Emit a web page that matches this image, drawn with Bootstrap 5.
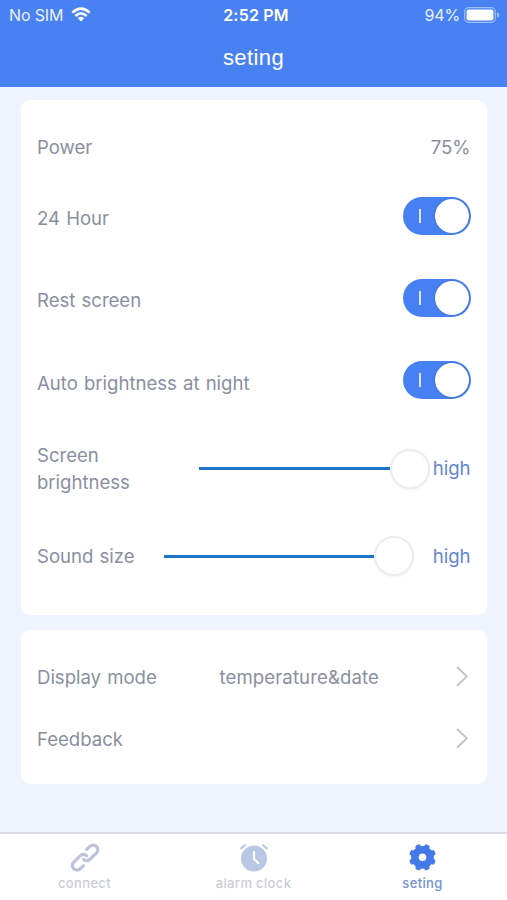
<!DOCTYPE html>
<html lang="en">
<head>
<meta charset="utf-8">
<meta name="viewport" content="width=device-width, initial-scale=1">
<title>seting</title>
<link href="https://cdn.jsdelivr.net/npm/bootstrap@5.3.0/dist/css/bootstrap.min.css" rel="stylesheet">
<style>
body{font-family:Inter,"Liberation Sans",sans-serif;background:#eff3ff;height:900px;overflow:hidden;color:#8a8f9f}
.topbar{background:#4881f2;height:87px;flex:none;color:#fff}
.status{height:29px;font-size:16px;line-height:30px;padding:0 7px 0 9px}
.status>div{flex:1 1 0}
.carrier{letter-spacing:-.15px;color:#e9f1ff}
.clock{font-weight:600;letter-spacing:.2px;padding-left:3px}
.title{font:400 22px/58px "Liberation Sans",sans-serif;letter-spacing:.4px}
.panel{background:#fff;border-radius:9px;margin:0 20px 0 21px;padding-left:16px;padding-right:16.5px;font-size:18.6px;line-height:27px;letter-spacing:-.03px;word-spacing:1px}
.panel-a{margin-top:13px;height:514.5px;padding-top:20.6px}
.panel-b{margin-top:15.5px;height:154px;padding-top:16px}
.h-power{height:54px;padding-bottom:.5px}
.h-toggle{height:82.2px}
.h-toggle .lbl{padding-top:6px}
.h-bright{height:95.6px}
.h-sound{height:79px}
.h-link{height:62px}
.switch{width:68px;height:38px;border-radius:19px;background:#4680f2;padding:2px 2px 2px 16.5px}
.switch i{width:1.5px;height:14px;background:#d6e4ff}
.switch b{width:34px;height:34px;border-radius:50%;background:#fff;box-shadow:0 0 2px #3a62b4}
.lbl-b{width:161.5px}
.lbl-s{width:127px}
.track{height:3px;background:#1f74ca}
.tw-b{width:191px}
.tw-s{width:210px}
.knob{width:40px;height:40px;border-radius:50%;background:#fff;border:2px solid #ededee;box-shadow:0 1px 3px rgba(0,0,0,.05);flex:none}
.high{color:#6187cf}
.mode{width:182.5px}
.val{letter-spacing:.1px}
.chev{margin-right:3px}
.tabs{margin-top:48px;flex:1;background:#fff;border-top:2px solid #d9dbe3;font-size:13px;font-weight:500;line-height:16px;color:#cbcdd5;letter-spacing:.35px;padding-top:8px}
.tabs svg{margin-bottom:3px}
.tabs .on{color:#7391d3}
</style>
<script src="https://cdn.jsdelivr.net/npm/bootstrap@5.3.0/dist/js/bootstrap.bundle.min.js"></script>
</head>
<body class="d-flex flex-column">
<header class="topbar">
  <div class="status d-flex">
    <div class="carrier d-flex align-items-center"><span>No SIM</span>
      <svg class="ms-2" width="20" height="15" viewBox="0 0 20 15" fill="none" stroke="#fff" stroke-width="2.6"><path d="M1.3 5.6Q10-2.2 18.7 5.6M4.4 8.9Q10 4 15.6 8.9"/><path d="M10 14.4L6.7 11.1Q10 8.4 13.3 11.1Z" fill="#fff" stroke="none"/></svg>
    </div>
    <div class="clock text-center">2:52 PM</div>
    <div class="carrier d-flex align-items-center justify-content-end"><span>94%</span>
      <svg class="ms-1" width="36" height="16" viewBox="0 0 36 16"><rect x=".7" y=".7" width="30.6" height="14.6" rx="4" fill="none" stroke="#9dbcfa" stroke-width="1.3"/><rect x="2.6" y="2.6" width="26.8" height="10.8" rx="2" fill="#fff"/><path d="M33 5.3Q35.4 6 35.4 8T33 10.7Z" fill="#9dbcfa"/></svg>
    </div>
  </div>
  <div class="title text-center">seting</div>
</header>
<main>
  <section class="panel panel-a">
    <div class="h-power d-flex align-items-center justify-content-between"><span>Power</span><span>75%</span></div>
    <div class="h-toggle d-flex align-items-center justify-content-between"><span class="lbl">24 Hour</span><span class="switch d-flex align-items-center justify-content-between"><i></i><b></b></span></div>
    <div class="h-toggle d-flex align-items-center justify-content-between"><span class="lbl">Rest screen</span><span class="switch d-flex align-items-center justify-content-between"><i></i><b></b></span></div>
    <div class="h-toggle d-flex align-items-center justify-content-between"><span class="lbl">Auto brightness at night</span><span class="switch d-flex align-items-center justify-content-between"><i></i><b></b></span></div>
    <div class="h-bright d-flex align-items-center"><span class="lbl-b">Screen<br>brightness</span><span class="track tw-b"></span><span class="knob"></span><span class="high ms-auto">high</span></div>
    <div class="h-sound d-flex align-items-center"><span class="lbl-s">Sound size</span><span class="track tw-s"></span><span class="knob"></span><span class="high ms-auto">high</span></div>
  </section>
  <section class="panel panel-b">
    <div class="h-link d-flex align-items-center"><span class="mode">Display mode</span><span class="val">temperature&amp;date</span>
      <svg class="ms-auto chev" width="12" height="22" viewBox="0 0 12 22" fill="none" stroke="#c2c3c8" stroke-width="1.9"><path d="M1 1L10.8 10.4L1 19.8"/></svg></div>
    <div class="h-link d-flex align-items-center"><span>Feedback</span>
      <svg class="ms-auto chev" width="12" height="22" viewBox="0 0 12 22" fill="none" stroke="#c2c3c8" stroke-width="1.9"><path d="M1 1L10.8 10.4L1 19.8"/></svg></div>
  </section>
</main>
<nav class="tabs d-flex">
  <div class="col-4 d-flex flex-column align-items-center">
    <svg width="30" height="30" viewBox="0 -.5 30 30" fill="none" stroke="#bdc3dc" stroke-width="3.2" stroke-linecap="round"><path d="M16.6 13.4C15 11.6 12.3 11.4 10.4 13.2L4 19.3C1.8 21.5 1.8 24.4 3.6 26.2C5.5 28 8.4 28 10.5 26L13.4 23.3"/><path d="M13.5 16.8C15.1 18.6 17.8 18.8 19.7 17L26.1 10.9C28.3 8.7 28.3 5.8 26.5 4C24.6 2.2 21.7 2.2 19.6 4.2L16.7 6.9"/></svg>
    <span>connect</span></div>
  <div class="col-4 d-flex flex-column align-items-center">
    <svg width="30" height="30" viewBox="0 0 30 30" fill="none" stroke-linecap="round"><circle cx="15" cy="16.6" r="13" fill="#b9c7e5"/><path d="M2.2 6.4L6 3.2M27.8 6.4L24 3.2" stroke="#b9c7e5" stroke-width="2.1"/><path d="M15 9.8V16.8L19.2 21" stroke="#fff" stroke-width="2.2"/></svg>
    <span>alarm clock</span></div>
  <div class="col-4 d-flex flex-column align-items-center on">
    <svg width="30" height="30" viewBox="-14.5 -15.3 30 30"><circle r="7.6" fill="none" stroke="#4579e8" stroke-width="7.6"/><g fill="#4579e8"><g id="teeth"><rect x="-2.7" y="-13.4" width="5.4" height="6" rx="1.4" transform="rotate(22.5)"/><rect x="-2.7" y="-13.4" width="5.4" height="6" rx="1.4" transform="rotate(67.5)"/></g><use href="#teeth" transform="rotate(90)"/><use href="#teeth" transform="rotate(180)"/><use href="#teeth" transform="rotate(270)"/></g></svg>
    <span>seting</span></div>
</nav>
</body>
</html>
